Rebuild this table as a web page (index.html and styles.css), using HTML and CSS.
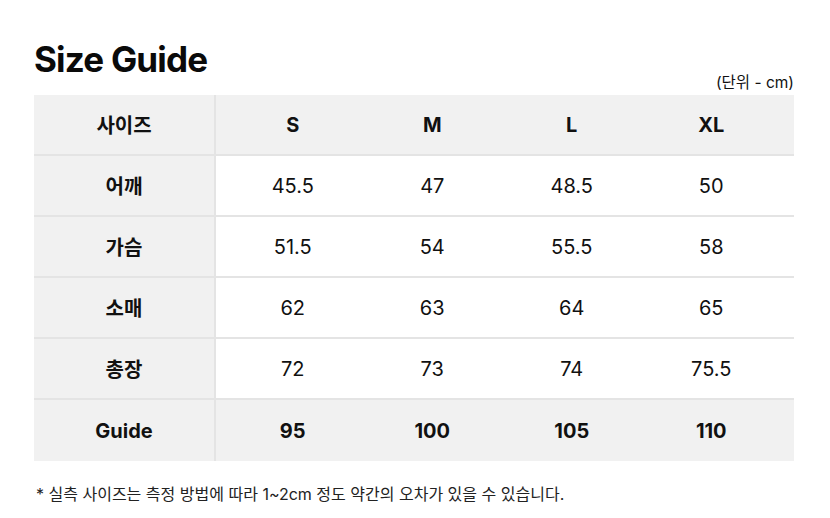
FILE: index.html
```html
<!DOCTYPE html>
<html lang="ko">
<head>
<meta charset="utf-8">
<link rel="stylesheet" href="styles.css">
</head>
<body>
<div class="page">
  <h1 class="title">Size Guide</h1>
  <div class="unit">(단위 - cm)</div>
  <div class="table">
    <div class="row head">
      <div class="cell label">사이즈</div>
      <div class="cell first">S</div>
      <div class="cell">M</div>
      <div class="cell">L</div>
      <div class="cell">XL</div>
    </div>
    <div class="row">
      <div class="cell label">어깨</div>
      <div class="cell first">45.5</div>
      <div class="cell">47</div>
      <div class="cell">48.5</div>
      <div class="cell">50</div>
    </div>
    <div class="row">
      <div class="cell label">가슴</div>
      <div class="cell first">51.5</div>
      <div class="cell">54</div>
      <div class="cell">55.5</div>
      <div class="cell">58</div>
    </div>
    <div class="row">
      <div class="cell label">소매</div>
      <div class="cell first">62</div>
      <div class="cell">63</div>
      <div class="cell">64</div>
      <div class="cell">65</div>
    </div>
    <div class="row">
      <div class="cell label">총장</div>
      <div class="cell first">72</div>
      <div class="cell">73</div>
      <div class="cell">74</div>
      <div class="cell">75.5</div>
    </div>
    <div class="row head last">
      <div class="cell label">Guide</div>
      <div class="cell first">95</div>
      <div class="cell">100</div>
      <div class="cell">105</div>
      <div class="cell">110</div>
    </div>
  </div>
  <p class="note">* 실측 사이즈는 측정 방법에 따라 1~2cm 정도 약간의 오차가 있을 수 있습니다.</p>
</div>
</body>
</html>
```
FILE: styles.css
```css
html, body {
  margin: 0;
  padding: 0;
  background: #ffffff;
}
body {
  font-family: "Inter", "Noto Sans CJK KR", sans-serif;
  color: #111111;
}
.page {
  width: 760px;
  padding: 38px 0 0 34px;
}
.title {
  margin: 0;
  font-size: 35px;
  line-height: 42px;
  font-weight: 700;
  letter-spacing: -0.8px;
  color: #0a0a0a;
}
.unit {
  text-align: right;
  font-size: 15.5px;
  line-height: 20px;
  margin-top: -7px;
  margin-bottom: 2px;
  color: #111;
}
.table {
  display: flex;
  flex-direction: column;
}
.row {
  display: grid;
  grid-template-columns: 182px 146.5px 139.5px 139.5px 139.5px;
  padding-right: 13px;
  height: 59px;
  border-bottom: 2px solid #e4e4e4;
  font-size: 20px;
}
.row.head {
  background: #f1f1f1;
  font-weight: 700;
}
.row.last {
  border-bottom: none;
  height: 61px;
}
.cell {
  display: flex;
  align-items: center;
  justify-content: center;
}
.cell.first {
  padding-left: 7px;
}
.cell.label {
  background: #f1f1f1;
  font-weight: 700;
  border-right: 2px solid #e4e4e4;
}
.note {
  margin: 23px 0 0 2px;
  font-size: 16px;
  line-height: 20px;
  color: #222;
}
```
